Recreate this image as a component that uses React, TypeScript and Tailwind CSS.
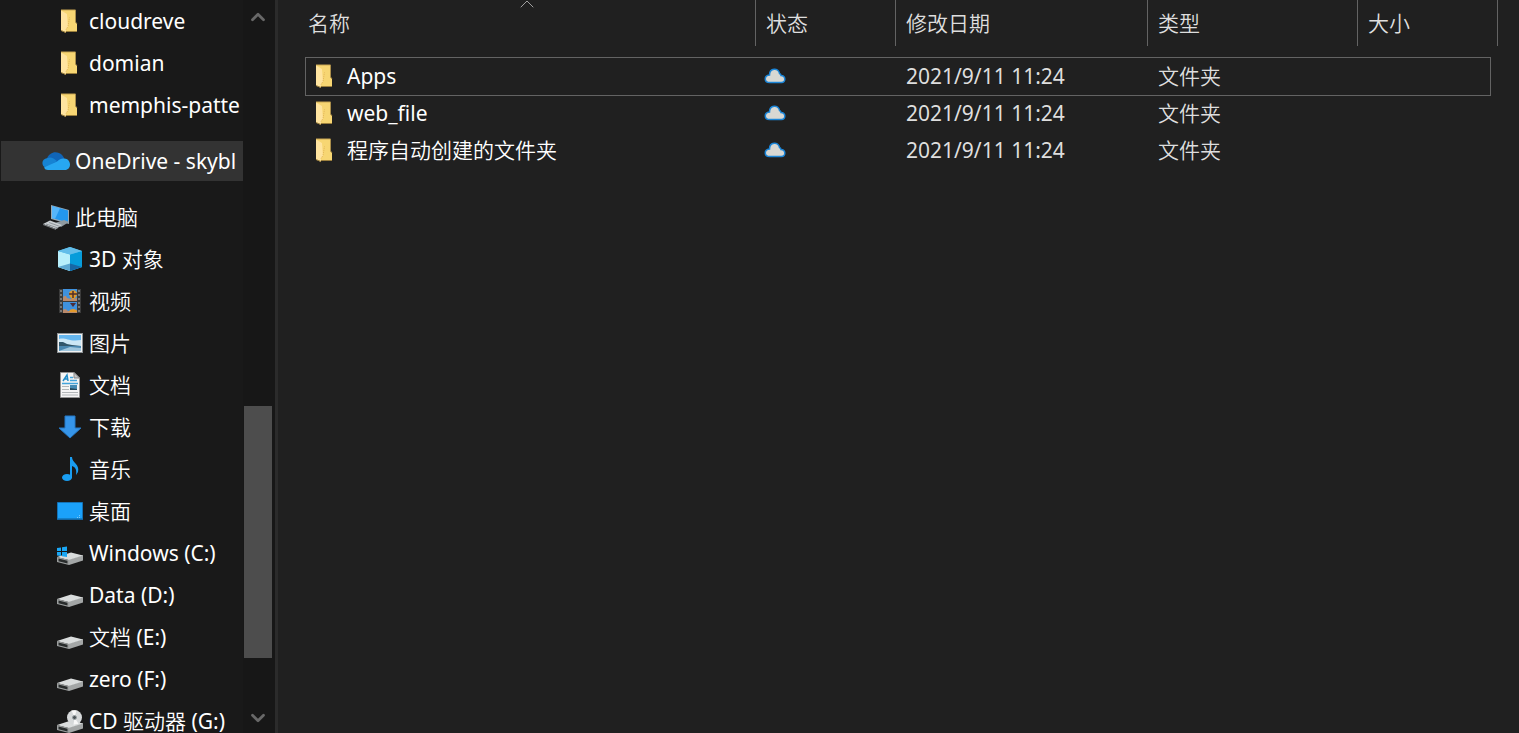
import type { ReactNode } from 'react';
import { ChevronDown, ChevronUp } from 'lucide-react';

const FONT = "font-['Noto_Sans','Noto_Sans_CJK_SC_DemiLight','Noto_Sans_CJK_SC',sans-serif]";

const COLUMNS = ['名称', '状态', '修改日期', '类型', '大小'];

const FILES = [
  { name: 'Apps', date: '2021/9/11 11:24', type: '文件夹', focused: true },
  { name: 'web_file', date: '2021/9/11 11:24', type: '文件夹', focused: false },
  { name: '程序自动创建的文件夹', date: '2021/9/11 11:24', type: '文件夹', focused: false },
];

const QUICK_ACCESS = ['cloudreve', 'domian', 'memphis-patte'];

const PC_ITEMS: { label: string; icon: ReactNode }[] = [
  { label: '3D 对象', icon: <CubeIcon /> },
  { label: '视频', icon: <VideoIcon /> },
  { label: '图片', icon: <PictureIcon /> },
  { label: '文档', icon: <DocumentIcon /> },
  { label: '下载', icon: <DownloadIcon /> },
  { label: '音乐', icon: <MusicIcon /> },
  { label: '桌面', icon: <DesktopIcon /> },
  { label: 'Windows (C:)', icon: <DriveIcon windows /> },
  { label: 'Data (D:)', icon: <DriveIcon /> },
  { label: '文档 (E:)', icon: <DriveIcon /> },
  { label: 'zero (F:)', icon: <DriveIcon /> },
  { label: 'CD 驱动器 (G:)', icon: <DriveIcon disc /> },
];

export default function App() {
  return (
    <div className={`flex h-screen overflow-hidden bg-[#202020] text-[21px] leading-7 text-white ${FONT}`}>
      <Sidebar />
      <main className="min-w-0 flex-1 pl-5">
        <FileTable />
      </main>
    </div>
  );
}

function Sidebar() {
  return (
    <aside className="flex shrink-0 border-r-3 border-[#2b2b2b] bg-[#191919]">
      <nav className="flex w-[243px] flex-col gap-3.5">
        <ul>
          {QUICK_ACCESS.map((name) => (
            <TreeItem key={name} label={name} icon={<FolderIcon />} nested />
          ))}
        </ul>
        <ul>
          <TreeItem label="OneDrive - skybl" icon={<OneDriveIcon />} selected />
        </ul>
        <ul>
          <TreeItem label="此电脑" icon={<ComputerIcon />} />
          {PC_ITEMS.map((item) => (
            <TreeItem key={item.label} label={item.label} icon={item.icon} nested />
          ))}
        </ul>
      </nav>
      <Scrollbar />
    </aside>
  );
}

function TreeItem({
  label,
  icon,
  nested,
  selected,
}: {
  label: string;
  icon: ReactNode;
  nested?: boolean;
  selected?: boolean;
}) {
  return (
    <li className="py-px pl-px">
      <a
        href="#"
        className={`flex h-10 items-center gap-1 whitespace-nowrap ${nested ? 'pl-[54px]' : 'pl-10'} ${selected ? 'bg-[#333333]' : ''}`}
      >
        <span className="flex w-[30px] shrink-0 justify-center">{icon}</span>
        <span>{label}</span>
      </a>
    </li>
  );
}

function Scrollbar() {
  return (
    <div className="flex w-8 flex-col bg-[#171717] pr-[3px] pl-px">
      <button type="button" aria-label="向上滚动" className="flex h-[34px] items-center justify-center text-[#686868]">
        <ChevronUp className="size-[22px]" strokeWidth={3} />
      </button>
      <div className="flex flex-1 flex-col">
        <div className="grow-[372]" />
        <div className="grow-[252] bg-[#4d4d4d]" />
        <div className="grow-[45]" />
      </div>
      <button type="button" aria-label="向下滚动" className="flex h-[30px] items-center justify-center text-[#686868]">
        <ChevronDown className="size-[22px]" strokeWidth={3} />
      </button>
    </div>
  );
}

function FileTable() {
  return (
    <table className="block">
      <thead className="block pr-[21px]">
        <tr className="grid grid-cols-[minmax(0,1fr)_140px_252px_210px_140px]">
          {COLUMNS.map((title, i) => (
            <th
              key={title}
              scope="col"
              aria-sort={i === 0 ? 'ascending' : undefined}
              className="relative h-[46px] border-r border-[#636363] pl-2.5 text-left font-normal text-[#dedede]"
            >
              <button type="button" className="h-full w-full text-left">
                {title}
              </button>
              {i === 0 && (
                <ChevronUp
                  className="absolute -top-2 left-1/2 size-6 -translate-x-1/2 text-[#a0a0a0]"
                  strokeWidth={1}
                />
              )}
            </th>
          ))}
        </tr>
      </thead>
      <tbody className="block pt-3 pr-[29px] pl-2">
        {FILES.map((file) => (
          <tr
            key={file.name}
            className={`grid h-[37px] grid-cols-[minmax(0,1fr)_140px_252px_210px_132px] items-center pb-0.5 text-[#dedede] ${file.focused ? 'outline outline-[#636363]' : ''}`}
          >
            <td className="flex items-center gap-[13px] pl-2.5 text-white">
              <FolderIcon />
              {file.name}
            </td>
            <td className="pl-2">
              <CloudIcon />
            </td>
            <td className="pl-2.5">{file.date}</td>
            <td className="pl-2.5">{file.type}</td>
            <td />
          </tr>
        ))}
      </tbody>
    </table>
  );
}

function FolderIcon() {
  return (
    <svg width="18" height="24" viewBox="0 0 18 24" className="shrink-0">
      <path d="M0 1h14.500v12l1.500 2v7H0z" fill="#f7d673" />
      <path d="M0 1h14.500" stroke="#c9a553" />
      <path d="M14.500 1v12l1.500 2" stroke="#a98d4a" fill="none" />
      <path d="M0 1.500l6 3.500 1 13-2 2v4L0 21.500z" fill="#ffe4a0" />
      <path d="M5 20.500l2-3 1.500-9" stroke="#e3b55a" strokeDasharray="1 1" fill="none" />
      <path d="M5 22.500h11M0 21.500l5 2" stroke="#9b7f3d" />
    </svg>
  );
}

function OneDriveIcon() {
  return (
    <svg width="28" height="18" viewBox="0 0 28 18">
      <path d="M5 6.500C7 1.500 12-1 17 1c3 1 4.500 3.500 5.300 5.500L14 12 3 14z" fill="#1065b8" />
      <path d="M5.500 6C9 4.500 12 6.500 15 9L4 16C-1 14-1 7 5.500 6z" fill="#1683d3" />
      <path d="M2 15.500L15 9.500c2.500-2.500 5-3.500 7.500-3 3 .3 5.500 2.500 5.500 6 0 3-2 5.500-5 5.500H6c-2 0-3.200-.8-4-2.500z" fill="#27a7f2" />
    </svg>
  );
}

function ComputerIcon() {
  return (
    <svg width="28" height="26" viewBox="0 0 28 26">
      <path d="M9 1l18 5v14L9 15z" fill="#9aa9b3" />
      <path d="M10 2l16 4.500v12L10 14z" fill="#2397ee" />
      <path d="M10 2l8 2.300L13 15l-3-1z" fill="#56b5fa" />
      <path d="M13 19l9-3 5 2-8 5z" fill="#8f9aa0" />
      <path d="M1 20l7-3.500 12 4.500-6 4z" fill="#c9ced1" />
      <path d="M1 20l13 5v1L1 21z" fill="#75797c" />
      <path d="M4 20l12 4M7 18.500l11 4" stroke="#91989c" />
    </svg>
  );
}

function CubeIcon() {
  return (
    <svg width="26" height="26" viewBox="0 0 26 26">
      <path d="M1 5l12-4 12 4v16l-12 4-12-4z" fill="#42b8ea" />
      <path d="M1 5l12 3.500V25L1 21z" fill="#b8effb" />
      <path d="M13 8.500L25 5v16l-12 4z" fill="#079cda" />
      <path d="M1 5l12-4 12 4-12 3.500z" fill="#63bde9" />
      <path d="M1 21l12-3.500V25z" fill="#5fa9d2" />
      <path d="M13 17.500L25 21l-12 4z" fill="#1767a5" />
    </svg>
  );
}

function VideoIcon() {
  return (
    <svg width="22" height="26" viewBox="0 0 22 26">
      <path d="M0 1h22v24H0z" fill="#3b3b3b" />
      <path d="M4 1h14v12H4zM4 14h14v11H4z" fill="#3f91dd" />
      <path d="M4 10c1-3 3-3 4 0l4 1 6-1v3H4zM4 22c2-2 3-1 5 1h4l5-1v3H4z" fill="#b98a6c" />
      <path d="M10 6c0-5 8-5 8 0 0 2-2 4-3 5h-2c-1-1-3-3-3-5z" fill="#e09a2b" />
      <path d="M10 6h8M14 3v7" stroke="#512f2a" strokeWidth="1.500" />
      <path d="M11 15h6l-3 4z" fill="#4a2d3a" />
      <path d="M10 24c0-4 8-4 8 0z" fill="#e29a2c" />
      <path d="M2 2v23M20 2v23" stroke="#777" strokeWidth="2" strokeDasharray="2 2" />
    </svg>
  );
}

function PictureIcon() {
  return (
    <svg width="26" height="20" viewBox="0 0 26 20">
      <path d="M0 0h26v20H0z" fill="#8c9295" />
      <path d="M1 1h24v18H1z" fill="#f1f1f1" />
      <path d="M2 2h22v16H2z" fill="#65b6ee" />
      <path d="M2 6c7-2 9 3 22 1v6H2z" fill="#cce7f5" />
      <path d="M2 9l4 0 4 2 5 1 9 1v1H2z" fill="#31566a" />
      <path d="M2 13h22v5H2z" fill="#4a87af" />
      <path d="M2 18l11-4 11 1v3z" fill="#9fc6dd" />
    </svg>
  );
}

function DocumentIcon() {
  return (
    <svg width="20" height="26" viewBox="0 0 20 26">
      <path d="M0.500 0.500H14l5.500 5.500v19.500H0.500z" fill="#f5f5f5" stroke="#929292" />
      <path d="M14 0.500V6h5.500z" fill="#c4c8ca" stroke="#858585" />
      <path d="M3 9l4-6 1 6M4 7h4" stroke="#238cc7" strokeWidth="1.500" fill="none" />
      <path d="M10 5.500h3M10 8.500h7M2 11.500h16" stroke="#43a4db" strokeWidth="1.500" />
      <path d="M2 14.500h7M2 17.500h7M2 20.500h16M2 23h16" stroke="#b2b6b8" />
      <path d="M10 13h7v5h-7z" fill="#468bb4" />
      <path d="M10 16l7 1v1h-7z" fill="#27495c" />
    </svg>
  );
}

function DownloadIcon() {
  return (
    <svg width="24" height="24" viewBox="0 0 24 24">
      <path d="M7 1h10v12h6L12 23 1 13h6z" fill="#3695e9" stroke="#2479c6" />
    </svg>
  );
}

function MusicIcon() {
  return (
    <svg width="20" height="26" viewBox="0 0 20 26">
      <ellipse cx="7" cy="21.500" rx="5" ry="3.500" fill="#199df1" />
      <path d="M10 1h2c0 6 8 7 6 15l-2 3c1-6-1-8-4-9v12h-2z" fill="#199df1" />
    </svg>
  );
}

function DesktopIcon() {
  return (
    <svg width="26" height="20" viewBox="0 0 26 20">
      <path d="M0.500 1.500h25v17h-25z" fill="#1ba1fa" stroke="#1472b6" />
      <path d="M1 18h24" stroke="#0f5c96" />
      <path d="M20 16.500h4M22 14.500h2" stroke="#7bc9fb" strokeDasharray="1 1" />
    </svg>
  );
}

function DriveIcon({ windows, disc }: { windows?: boolean; disc?: boolean }) {
  return (
    <svg width="26" height="26" viewBox="0 0 26 26">
      <path d="M11 19.500L26 15v5.500L12 25z" fill="#a3a6a6" />
      <path d="M0 17l14-4.500L26 15.500 11.500 20z" fill="#dadddd" />
      <path d="M0 17l12 3v5L0 22z" fill="#9b9e9e" />
      <path d="M1.500 18.500l9 2.300v2.700l-9-2.300z" fill="#292c2c" />
      {windows && (
        <path d="M0 8l4-.6V11H0zM5 7.200l5-.7V11H5zM0 12h4v4l-4-.6zM5 12h5v5l-5-.8z" fill="#1aa7f5" />
      )}
      {disc && (
        <>
          <circle cx="17.500" cy="9.500" r="7.500" fill="#d6d9da" />
          <path d="M17.500 9.500l-3-7h5zM17.500 9.500l4 6.300-5 1z" fill="#f8f8f8" />
          <circle cx="17.500" cy="9.500" r="2" fill="#4d5558" stroke="#9ba3a6" />
        </>
      )}
    </svg>
  );
}

function CloudIcon() {
  return (
    <svg width="22" height="16" viewBox="0 0 22 16" role="img" aria-label="联机时可用">
      <path
        d="M5.500 14.500C0 14.500-.3 7.500 5.500 7 5.500-.5 14.500-.5 15.500 5.500c1 .5 1.500 1.300 1.500 2 5 .3 5 7 .5 7z"
        fill="#d8d8d3"
        stroke="#1c86d8"
        strokeWidth="1.500"
      />
    </svg>
  );
}
